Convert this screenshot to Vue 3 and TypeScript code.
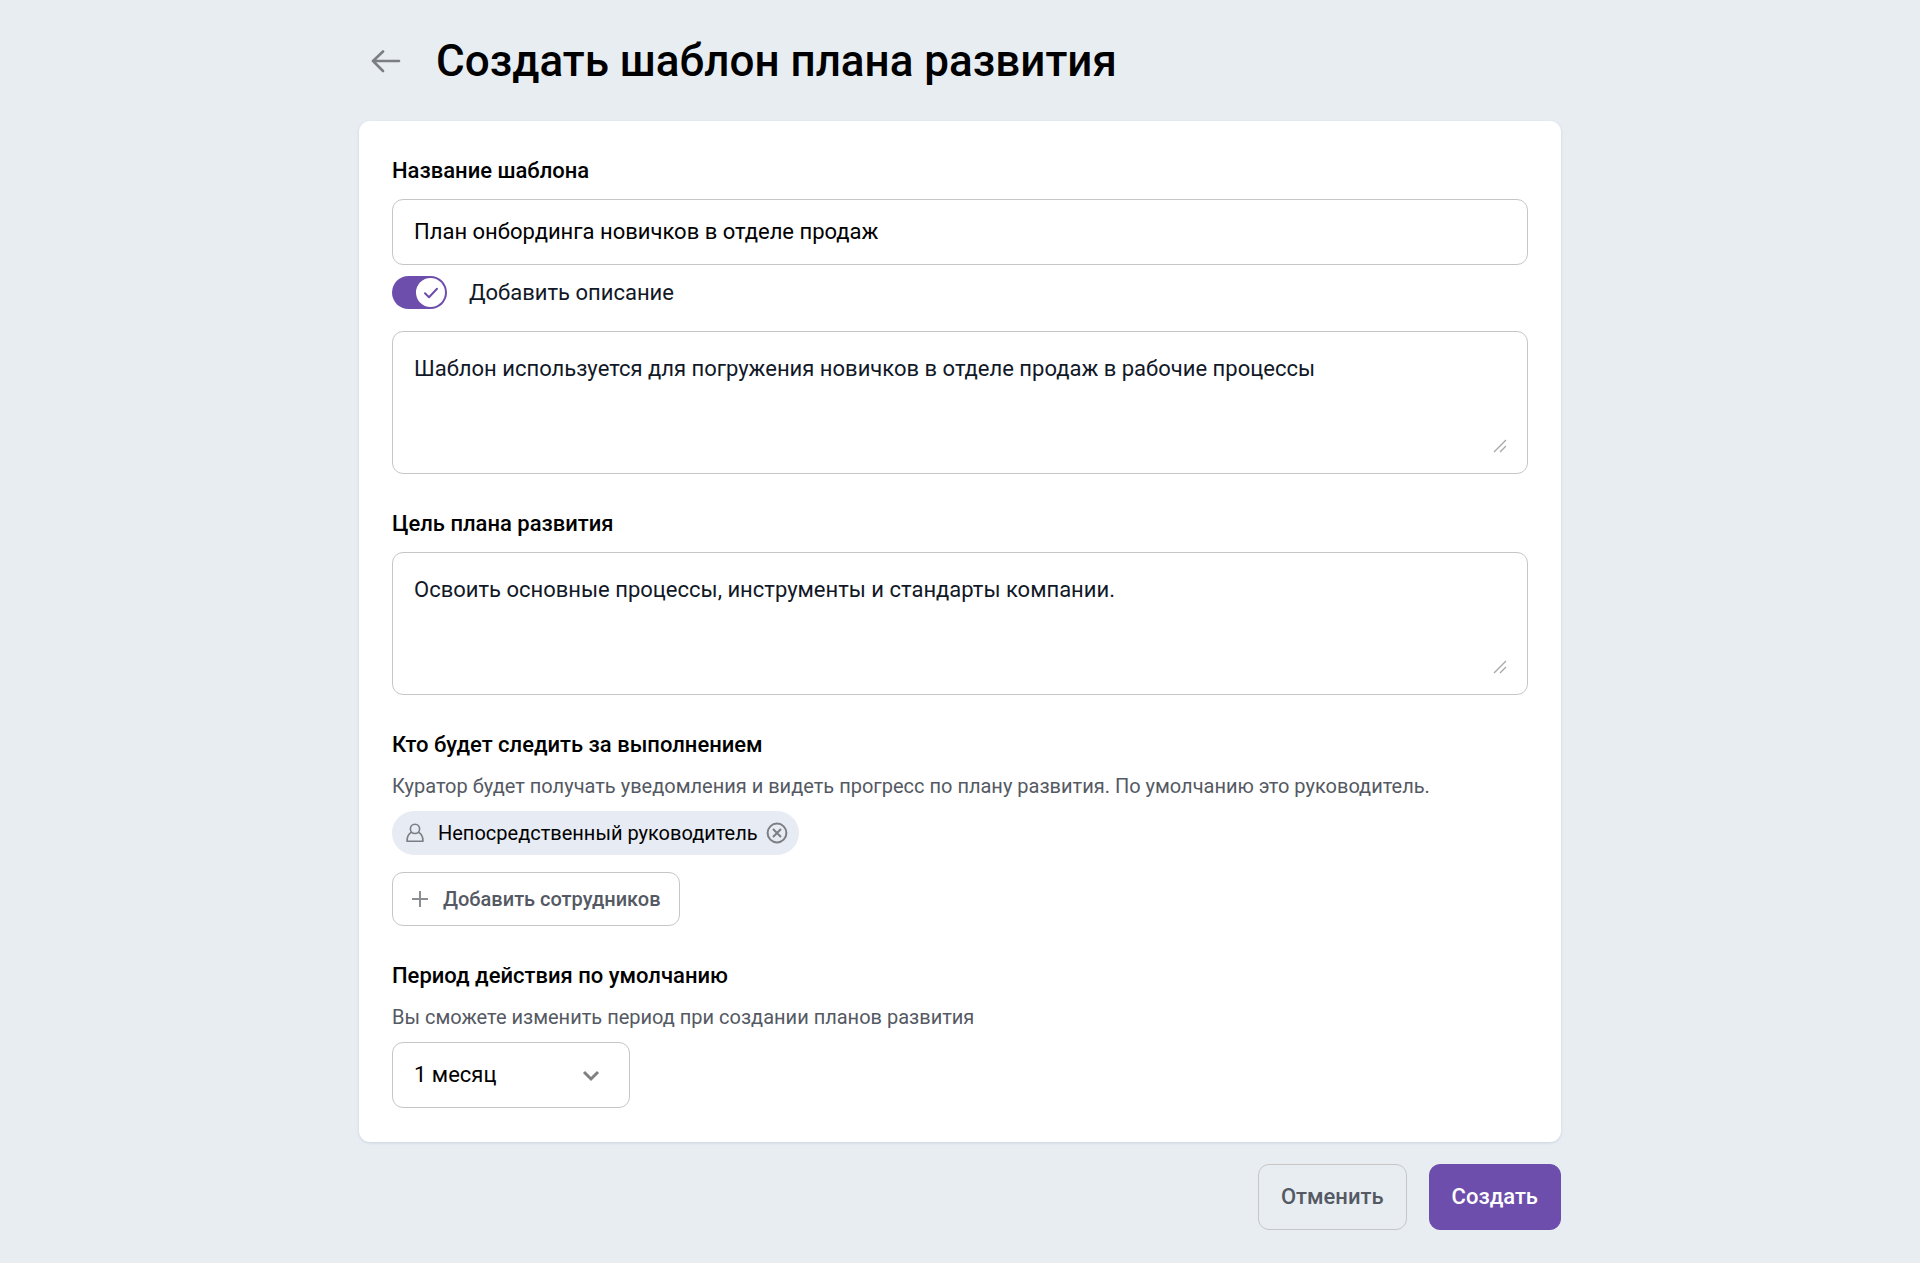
<script setup lang="ts">
import { ref } from 'vue'

const name = ref<string>('План онбординга новичков в отделе продаж')
const hasDescription = ref<boolean>(true)
const description = ref<string>('Шаблон используется для погружения новичков в отделе продаж в рабочие процессы')
const goal = ref<string>('Освоить основные процессы, инструменты и стандарты компании.')
const curators = ref<string[]>(['Непосредственный руководитель'])
const periods: string[] = ['1 месяц', '3 месяца', '6 месяцев', '1 год']
const period = ref<string>(periods[0])

function removeCurator(curator: string): void {
  curators.value = curators.value.filter((item) => item !== curator)
}
</script>

<template>
  <main class="page">
    <header class="header">
      <button class="back" type="button" aria-label="Назад">
        <svg width="30" height="24" viewBox="0 0 30 24" fill="none" stroke="#7b7e83" stroke-width="2.6" stroke-linecap="round" stroke-linejoin="round">
          <path d="M28 11H2M12 1.500 2 11l10 10" />
        </svg>
      </button>
      <h1 class="title">Создать шаблон плана развития</h1>
    </header>

    <form @submit.prevent>
      <div class="card">
        <section class="section">
          <label class="label" for="name">Название шаблона</label>
          <input id="name" v-model="name" class="control text-input" type="text" />
          <label class="switch-row">
            <span class="switch">
              <input v-model="hasDescription" class="switch-input" type="checkbox" />
              <span class="knob">
                <svg width="16" height="12" viewBox="0 0 16 12" fill="none" stroke="#6e4eac" stroke-width="2" stroke-linecap="round" stroke-linejoin="round">
                  <path d="M2 6.2 6 10.2 14 1.8" />
                </svg>
              </span>
            </span>
            <span>Добавить описание</span>
          </label>
          <div v-if="hasDescription" class="area">
            <textarea v-model="description" class="control textarea" aria-label="Описание"></textarea>
            <svg class="grip" width="14" height="14" viewBox="0 0 14 14" stroke="#a6a6a6" stroke-width="1.3">
              <path d="M1 13 13 1M7 13l6-6" />
            </svg>
          </div>
        </section>

        <section class="section">
          <label class="label" for="goal">Цель плана развития</label>
          <div class="area">
            <textarea id="goal" v-model="goal" class="control textarea"></textarea>
            <svg class="grip" width="14" height="14" viewBox="0 0 14 14" stroke="#a6a6a6" stroke-width="1.3">
              <path d="M1 13 13 1M7 13l6-6" />
            </svg>
          </div>
        </section>

        <section class="section">
          <h2 class="label">Кто будет следить за выполнением</h2>
          <p class="hint">Куратор будет получать уведомления и видеть прогресс по плану развития. По умолчанию это руководитель.</p>
          <div class="chips">
            <div v-for="curator in curators" :key="curator" class="chip">
              <svg width="18" height="20" viewBox="0 0 18 20" fill="none" stroke="#7b7e83" stroke-width="1.6" stroke-linejoin="round">
                <circle cx="9" cy="5.9" r="4.6" />
                <path d="M5.600 9.200C2.600 10.600 1 13.600 1 18.200h16c0-4.600-1.600-7.600-4.600-9" />
              </svg>
              <span class="chip-text">{{ curator }}</span>
              <button class="remove" type="button" :aria-label="`Удалить: ${curator}`" @click="removeCurator(curator)">
                <svg width="22" height="22" viewBox="0 0 22 22" fill="none" stroke="#7b7e83" stroke-width="2">
                  <circle cx="11" cy="11" r="9.4" />
                  <path d="m7 7 8 8M15 7l-8 8" />
                </svg>
              </button>
            </div>
          </div>
          <button class="add" type="button">
            <svg width="18" height="18" viewBox="0 0 18 18" fill="none" stroke="#8a8d91" stroke-width="2">
              <path d="M9 1v16M1 9h16" />
            </svg>
            <span>Добавить сотрудников</span>
          </button>
        </section>

        <section class="section">
          <label class="label" for="period">Период действия по умолчанию</label>
          <p class="hint">Вы сможете изменить период при создании планов развития</p>
          <div class="select">
            <select id="period" v-model="period" class="control">
              <option v-for="item in periods" :key="item">{{ item }}</option>
            </select>
            <svg class="chevron" width="18" height="12" viewBox="0 0 18 12" fill="none" stroke="#808080" stroke-width="3">
              <path d="m2 2 7 7 7-7" />
            </svg>
          </div>
        </section>
      </div>

      <footer class="footer">
        <button class="action" type="button">Отменить</button>
        <button class="action primary" type="submit">Создать</button>
      </footer>
    </form>
  </main>
</template>

<style>
body {
  margin: 0;
  background: #e8edf2;
}
</style>

<style scoped>
.page,
.page * {
  box-sizing: border-box;
}

.page {
  max-width: 1202px;
  margin: 0 auto;
  padding: 35px 0 33px;
  font-family: Roboto, "Liberation Sans", sans-serif;
  font-size: 22px;
  line-height: 30px;
  color: #000;
}

button,
input,
select,
textarea {
  margin: 0;
  font: inherit;
  color: inherit;
}

button {
  padding: 0;
  border: 0;
  background: none;
  cursor: pointer;
}

svg {
  display: block;
  flex: none;
}

.header {
  display: flex;
  align-items: center;
  gap: 35px;
  padding-left: 12px;
  margin-bottom: 33px;
}

.title {
  margin: 0;
  font-size: 44px;
  line-height: 53px;
  font-weight: 500;
}

.card {
  display: flex;
  flex-direction: column;
  gap: 35px;
  padding: 35px 33px 34px;
  border-radius: 11px;
  background: #fff;
  box-shadow: 0 1px 3px rgba(90, 110, 160, 0.2);
}

.section {
  display: flex;
  flex-direction: column;
  align-items: flex-start;
}

.label {
  margin: 0 0 13px;
  font-size: 22px;
  font-weight: 500;
}

.control {
  display: block;
  width: 100%;
  height: 66px;
  padding: 0 21px;
  border: 1px solid #c6c6c6;
  border-radius: 11px;
  background: #fff;
  outline: none;
}

.text-input {
  padding-bottom: 2px;
}

.switch-row {
  display: flex;
  align-items: center;
  gap: 22px;
  margin: 11px 0 22px;
  color: #111827;
  cursor: pointer;
}

.switch {
  position: relative;
  display: flex;
  width: 55px;
  height: 33px;
}

.switch-input {
  width: 100%;
  height: 100%;
  border-radius: 17px;
  background: #b9bcc2;
  appearance: none;
}

.switch-input:checked {
  background: #6e4eac;
}

.knob {
  position: absolute;
  top: 2px;
  left: 2px;
  display: flex;
  align-items: center;
  justify-content: center;
  width: 29px;
  height: 29px;
  border-radius: 50%;
  background: #fff;
}

.switch-input:checked + .knob {
  left: 24px;
}

.area {
  position: relative;
  width: 100%;
}

.textarea {
  height: 143px;
  padding: 22px 21px;
  color: #111827;
  resize: none;
}

.grip {
  position: absolute;
  right: 21px;
  bottom: 21px;
}

.hint {
  margin: 1px 0 12px;
  font-size: 20px;
  line-height: 25px;
  color: #545963;
}

.chips {
  display: flex;
  flex-wrap: wrap;
  gap: 11px;
  margin-bottom: 17px;
}

.chip {
  display: flex;
  align-items: center;
  height: 44px;
  padding: 0 11px 0 14px;
  border-radius: 22px;
  background: #e7ebf3;
  font-size: 20px;
}

.chip-text {
  margin: 0 8px 0 14px;
}

.add {
  display: flex;
  align-items: center;
  gap: 14px;
  height: 54px;
  padding: 0 18px;
  border: 1px solid #c6c6c6;
  border-radius: 11px;
  background: #fff;
  font-size: 20px;
  font-weight: 500;
  color: #545963;
}

.select {
  position: relative;
  width: 238px;
}

.select .control {
  appearance: none;
}

.chevron {
  position: absolute;
  top: 28px;
  right: 30px;
  pointer-events: none;
}

.footer {
  display: flex;
  justify-content: flex-end;
  gap: 22px;
  margin-top: 22px;
}

.action {
  height: 66px;
  padding: 0 22px;
  border: 1px solid #c6c6c6;
  border-radius: 11px;
  font-weight: 500;
  color: #545963;
}

.primary {
  border-color: #6e4eac;
  background: #6e4eac;
  color: #fff;
}
</style>
